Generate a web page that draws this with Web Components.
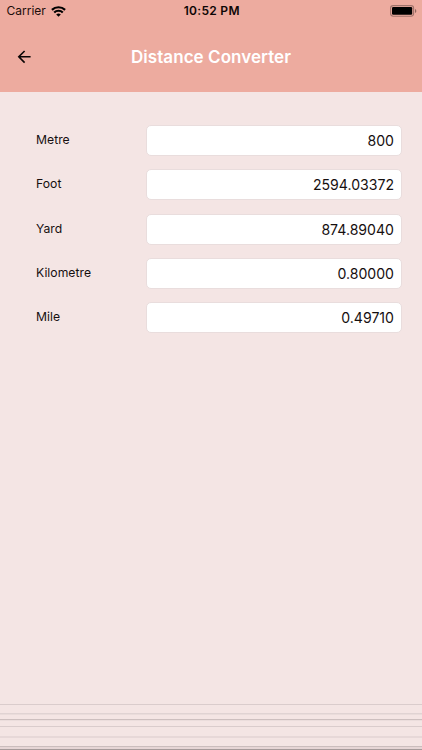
<!DOCTYPE html>
<html lang="en">
<head>
<meta charset="utf-8">
<meta name="viewport" content="width=device-width, initial-scale=1">
<title>Distance Converter</title>
<style>
  body {
    margin: 0;
    font-family: Inter, "Liberation Sans", sans-serif;
    color: #160f0f;
  }
</style>
</head>
<body>
<converter-app>
  <status-bar slot="header" carrier="Carrier" time="10:52 PM"></status-bar>
  <nav-bar slot="header">Distance Converter</nav-bar>
  <unit-field label="Metre">800</unit-field>
  <unit-field label="Foot">2594.03372</unit-field>
  <unit-field label="Yard">874.89040</unit-field>
  <unit-field label="Kilometre">0.80000</unit-field>
  <unit-field label="Mile">0.49710</unit-field>
  <picker-lines slot="footer"></picker-lines>
</converter-app>

<script>
class ConverterApp extends HTMLElement {
  constructor() {
    super();
    this.attachShadow({ mode: 'open' }).innerHTML = `
    <style>
    :host {
        display: flex;
        flex-direction: column;
        height: 750px;
        overflow: hidden;
        background-color: #f4e5e4;
    }

    header {
        height: 92px;
        background-color: #edab9f;
    }

    main {
        flex: 1;
        display: flex;
        flex-direction: column;
        gap: 13.3px;
        padding: 33.1px 20.5px 0 36px;
    }
    </style>
    <header><slot name="header"></slot></header>
    <main><slot></slot></main>
    <slot name="footer"></slot>`;
  }
}

class StatusBar extends HTMLElement {
  constructor() {
    super();
    this.attachShadow({ mode: 'open' });
  }

  connectedCallback() {
    this.shadowRoot.innerHTML = `
    <style>
    :host {
        display: grid;
        grid-template-columns: 1fr auto 1fr;
        align-items: center;
        height: 22px;
        padding: 0 5px 0 6.5px;
        font-size: 12px;
        line-height: 22px;
        color: #1d0d0b;
    }

    .carrier {
        display: flex;
        align-items: center;
        gap: 5px;
        letter-spacing: 0;
    }

    .time {
        font-weight: 600;
        letter-spacing: .3px;
        color: #0d0605;
    }

    .battery {
        justify-self: end;
    }

    svg {
        display: block;
    }
    </style>
    <div class="carrier">
        <span>${this.getAttribute('carrier')}</span>
        <svg width="15" height="11" viewBox="0 0 15 11" fill="none" stroke="#000" stroke-width="2.2">
            <path d="M.9 3.9A9.5 9.5 0 0 1 14.1 3.9" />
            <path d="M3.2 6.5A6.1 6.1 0 0 1 11.8 6.5" />
            <path d="M7.5 10.8 5.2 8.5A3.3 3.3 0 0 1 9.8 8.5Z" fill="#000" stroke="none" />
        </svg>
    </div>
    <span class="time">${this.getAttribute('time')}</span>
    <svg class="battery" width="27" height="12" viewBox="0 0 27 12">
        <rect x=".6" y=".6" width="23" height="10.6" rx="2.6" fill="none" stroke="#a0736b" stroke-width="1.1" />
        <rect x="2" y="2" width="20.2" height="7.8" rx="1.2" fill="#000" />
        <path d="M25 4v4c1.8-.6 1.8-3.4 0-4Z" fill="#8f655e" />
    </svg>`;
  }
}

class NavBar extends HTMLElement {
  constructor() {
    super();
    this.attachShadow({ mode: 'open' }).innerHTML = `
    <style>
    :host {
        display: grid;
        grid-template-columns: 1fr auto 1fr;
        align-items: center;
        height: 70px;
        padding: 0 17px;
    }

    button {
        display: block;
        justify-self: start;
        padding: 0;
        border: 0;
        background: none;
        cursor: pointer;
    }

    svg {
        display: block;
    }

    h1 {
        margin: 0;
        font-size: 17px;
        font-weight: 600;
        line-height: 24px;
        letter-spacing: .06px;
        color: #fff;
    }
    </style>
    <button aria-label="Back">
        <svg width="14" height="14" viewBox="0 0 14 14" fill="none" stroke="#0b0504" stroke-width="1.6">
            <path d="M13.6 6.8H2M7.6 1 1.8 6.8l5.8 5.8" />
        </svg>
    </button>
    <h1><slot></slot></h1>`;
  }
}

class UnitField extends HTMLElement {
  constructor() {
    super();
    this.attachShadow({ mode: 'open' });
  }

  connectedCallback() {
    this.shadowRoot.innerHTML = `
    <style>
    :host {
        display: grid;
        grid-template-columns: 110px 1fr;
        height: 31px;
    }

    .label {
        font-size: 12.2px;
        line-height: 29px;
        letter-spacing: .02px;
    }

    .value {
        box-sizing: border-box;
        height: 31px;
        padding-right: 6.5px;
        border: 1px solid #e9dddd;
        border-radius: 5px;
        background-color: #fff;
        font-size: 14.1px;
        line-height: 29px;
        text-align: right;
    }
    </style>
    <span class="label">${this.getAttribute('label')}</span>
    <div class="value"><slot></slot></div>`;
  }
}

class PickerLines extends HTMLElement {
  constructor() {
    super();
    this.attachShadow({ mode: 'open' }).innerHTML = `
    <style>
    :host {
        display: block;
        height: 46px;
    }

    svg {
        display: block;
        width: 100%;
    }
    </style>
    <svg height="46" viewBox="0 0 422 46" preserveAspectRatio="none">
        <rect y="0" width="422" height="1" fill="#dacccc" />
        <rect y="9" width="422" height="1" fill="#e0d3d3" />
        <rect y="10" width="422" height="1" fill="#eadcdb" />
        <rect y="15" width="422" height="1" fill="#cdbfbf" />
        <rect y="16" width="422" height="1" fill="#ebdddc" />
        <rect y="22" width="422" height="1" fill="#dacccc" />
        <rect y="32" width="422" height="2" fill="#e7d8d8" />
        <rect y="42" width="422" height="1" fill="#cbbdbd" />
        <rect y="43" width="422" height="2" fill="#e6d5d5" />
        <rect y="45" width="422" height="1" fill="#a69a9a" />
    </svg>`;
  }
}

customElements.define('converter-app', ConverterApp);
customElements.define('status-bar', StatusBar);
customElements.define('nav-bar', NavBar);
customElements.define('unit-field', UnitField);
customElements.define('picker-lines', PickerLines);
</script>
</body>
</html>
